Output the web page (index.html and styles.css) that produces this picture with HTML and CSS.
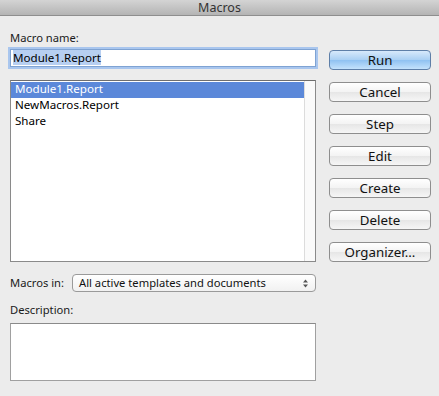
FILE: index.html
```html
<!DOCTYPE html>
<html lang="en">
<head>
  <meta charset="UTF-8" />
  <title>Macros</title>
  <link rel="stylesheet" href="styles.css">
</head>
<body>
  <div class="titlebar">Macros</div>
  <div class="dialog">
    <div class="left">
      <label class="lbl first">Macro name:</label>
      <div class="namebox"><span class="sel">Module1.Report</span></div>
      <div class="list">
        <div class="rows">
          <div class="row active">Module1.Report</div>
          <div class="row">NewMacros.Report</div>
          <div class="row">Share</div>
        </div>
        <div class="scroll"></div>
      </div>
      <div class="inrow">
        <span class="lbl">Macros in:</span>
        <div class="popup">
          <span class="popup-text">All active templates and documents</span>
          <svg class="arrows" width="5" height="9" viewBox="0 0 5 9"><path d="M0 3.5 L2.5 0.5 L5 3.5 Z M0 5.5 L2.5 8.5 L5 5.5 Z" fill="#555"/></svg>
        </div>
      </div>
      <label class="lbl desc-lbl">Description:</label>
      <div class="desc"></div>
    </div>
    <div class="right">
      <button class="btn default">Run</button>
      <button class="btn">Cancel</button>
      <button class="btn">Step</button>
      <button class="btn">Edit</button>
      <button class="btn">Create</button>
      <button class="btn">Delete</button>
      <button class="btn">Organizer...</button>
    </div>
  </div>
</body>
</html>
```

FILE: styles.css
```css
*{margin:0;padding:0;box-sizing:border-box;font-family:'Noto Sans','DejaVu Sans',sans-serif;}
body{background:#ececec;color:#111;font-size:11.2px;width:439px;height:396px;overflow:hidden;}
.titlebar{height:16px;line-height:15px;overflow:hidden;text-align:center;font-size:12.5px;color:#333;background:linear-gradient(#d4d4d4,#b4b4b4);border-bottom:1px solid #8e8e8e;}
.dialog{display:flex;padding:0 8px 0 10px;}
.left{width:306px;display:flex;flex-direction:column;}
.right{width:102px;margin-left:13px;padding-top:34px;display:flex;flex-direction:column;gap:12px;}
.lbl{display:block;line-height:14px;color:#1a1a1a;}
.first{margin-top:15px;}
.namebox{margin-top:4px;height:18px;background:#fff;border:1px solid #7fa3d3;box-shadow:0 0 0 2px #a9c6ee;padding:0 2px;line-height:16px;font-size:11.6px;}
.sel{background:#b7cff1;color:#000;}
.list{margin-top:13px;height:182px;background:#fff;border:1px solid #8a8a8a;border-top-color:#6e6e6e;display:flex;font-size:11.6px;}
.rows{flex:1;padding-top:1px;}
.row{height:16px;line-height:13px;padding-left:4px;color:#000;}
.row.active{background:#5b88d9;color:#fff;}
.scroll{width:11px;border-left:1px solid #dcdcdc;background:#fafafa;}
.inrow{display:flex;align-items:center;margin-top:12px;}
.popup{margin-left:8px;flex:1;height:18px;border:1px solid #9a9a9a;border-radius:4px;background:linear-gradient(#ffffff,#f1f1f1);padding:0 7px 0 6px;line-height:16px;display:flex;justify-content:space-between;align-items:center;color:#111;}
.arrows{display:block;}
.desc-lbl{margin-top:11px;}
.desc{margin-top:6px;height:58px;background:#fff;border:1px solid #a0a0a0;border-top-color:#8a8a8a;}
.btn{height:20px;border:1px solid #8e8e8e;border-radius:4px;background:linear-gradient(#ffffff,#f3f3f3 50%,#e6e6e6 51%,#f6f6f6);font-size:13.3px;color:#111;line-height:18px;}
.btn.default{background:linear-gradient(#d7e9fb,#a9cff3 50%,#8fc1f1 51%,#c4e2fc);border-color:#5e7fa8;}
```
